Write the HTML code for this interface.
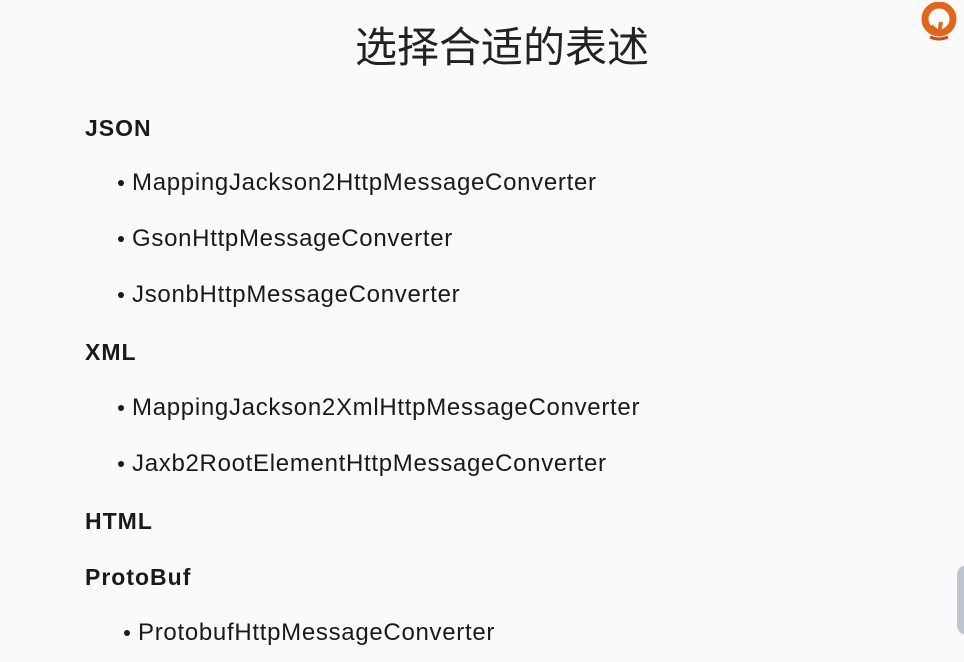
<!DOCTYPE html>
<html><head><meta charset="utf-8"><style>
html,body{margin:0;padding:0}
body{width:964px;height:662px;background:#fafafa;position:relative;overflow:hidden;font-family:"Liberation Sans",Arial,sans-serif;color:#1a1a1a}
.t{position:absolute;left:0;width:1004px;text-align:center;top:14px;font-family:"Liberation Sans","Noto Sans CJK SC",sans-serif;font-size:42px;color:#222}
.h{position:absolute;left:85px;font-weight:bold;font-size:23px;line-height:1;letter-spacing:1px}
.i{position:absolute;left:132px;font-size:24px;line-height:1;letter-spacing:0.7px}
.i:before{content:"";position:absolute;left:-14px;top:9px;width:6px;height:6px;border-radius:50%;background:#1a1a1a}
</style></head><body>
<div class="t">选择合适的表述</div>
<svg style="position:absolute;left:918px;top:2px" width="42" height="40" viewBox="0 0 42 40">
<circle cx="21" cy="17" r="14" fill="none" stroke="#e0661e" stroke-width="7"/>
<rect x="18" y="12" width="5" height="18" fill="#fafafa"/>
<path d="M13 24 L21 31 L23 20" fill="none" stroke="#e0661e" stroke-width="4"/>
<path d="M12 35 Q21 39 30 35" stroke="#d04a1a" stroke-width="3" fill="none"/>
</svg>
<div style="position:absolute;left:957px;top:565px;width:20px;height:70px;border-radius:10px;background:#8090a8;opacity:.5"></div>
<div class="h" style="top:117px">JSON</div>
<div class="i" style="top:171px">MappingJackson2HttpMessageConverter</div>
<div class="i" style="top:227px">GsonHttpMessageConverter</div>
<div class="i" style="top:283px">JsonbHttpMessageConverter</div>
<div class="h" style="top:341px">XML</div>
<div class="i" style="top:396px">MappingJackson2XmlHttpMessageConverter</div>
<div class="i" style="top:452px">Jaxb2RootElementHttpMessageConverter</div>
<div class="h" style="top:510px">HTML</div>
<div class="h" style="top:566px">ProtoBuf</div>
<div class="i" style="top:621px;left:138px">ProtobufHttpMessageConverter</div>
</body></html>
